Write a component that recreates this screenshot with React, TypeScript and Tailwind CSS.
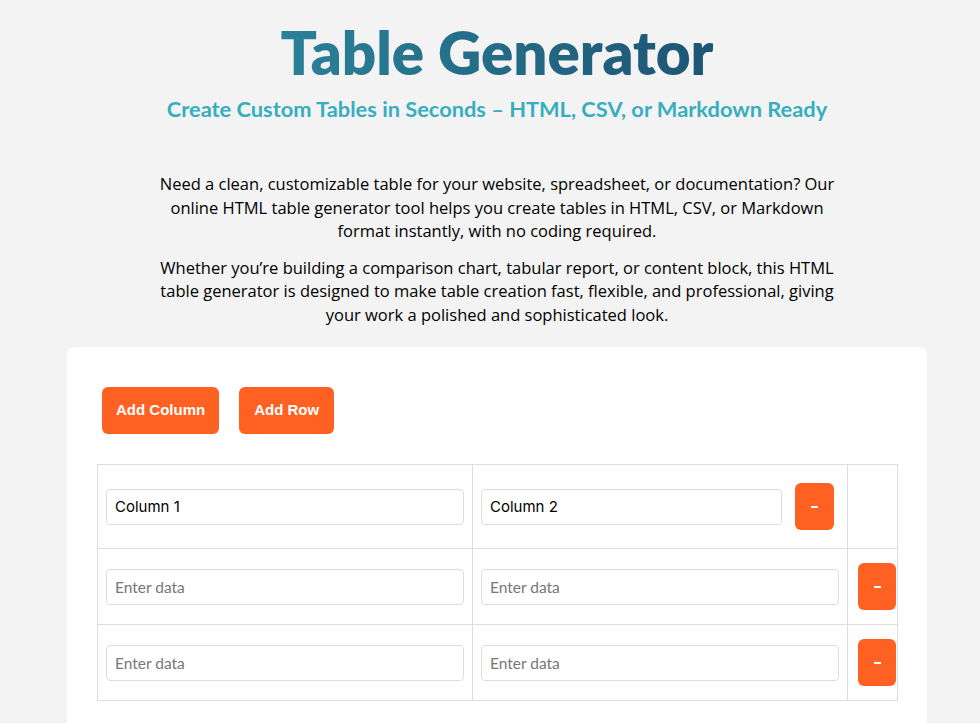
export default function App() {
  const rows = [0, 1];

  return (
    <div className="min-h-screen bg-[#f3f3f3] pl-[14px] font-['Lato',sans-serif] text-black">
      <div className="mx-auto flex w-[860px] flex-col items-center pt-[16px]">
        <h1 className="bg-gradient-to-r from-[#2b8199] to-[#1d5574] bg-clip-text text-[60px] leading-[72px] font-extrabold text-transparent">
          Table Generator
        </h1>
        <p className="mt-[8px] text-[21.8px] leading-[26px] font-bold text-[#37aebf]">
          Create Custom Tables in Seconds – HTML, CSV, or Markdown Ready
        </p>

        <div className="mt-[50px] w-[700px] text-center font-['Open_Sans',sans-serif] text-[16.5px] leading-[23.5px]">
          <p>
            Need a clean, customizable table for your website, spreadsheet, or documentation? Our online HTML table
            generator tool helps you create tables in HTML, CSV, or Markdown format instantly, with no coding required.
          </p>
          <p className="mt-[13px]">
            Whether you’re building a comparison chart, tabular report, or content block, this HTML table generator is
            designed to make table creation fast, flexible, and professional, giving your work a polished and
            sophisticated look.
          </p>
        </div>

        <div className="mt-[21px] w-[860px] rounded-lg bg-white px-[30px] pt-[40px] pb-[30px]">
          <div className="flex gap-5 pl-[5px]">
            <button className="h-[47px] rounded-md bg-[#ff6122] px-[14px] font-['Liberation_Sans',sans-serif] text-[15px] font-bold text-white">
              Add Column
            </button>
            <button className="h-[47px] rounded-md bg-[#ff6122] px-[15px] font-['Liberation_Sans',sans-serif] text-[15px] font-bold text-white">
              Add Row
            </button>
          </div>

          <table className="mt-[30px] w-[800px] table-fixed border-collapse">
            <colgroup>
              <col className="w-[375px]" />
              <col className="w-[375px]" />
              <col className="w-[50px]" />
            </colgroup>
            <tbody>
              <tr className="h-[84px]">
                <td className="border border-[#dddddd] px-2">
                  <input
                    defaultValue="Column 1"
                    className="h-[36px] w-full rounded border border-[#dddddd] px-2 font-['Inter',sans-serif] text-[15px] outline-none"
                  />
                </td>
                <td className="border border-[#dddddd] px-2">
                  <div className="flex items-center gap-[13px]">
                    <input
                      defaultValue="Column 2"
                      className="h-[36px] w-[301px] rounded border border-[#dddddd] px-2 font-['Inter',sans-serif] text-[15px] outline-none"
                    />
                    <button className="flex h-[47px] w-[39px] items-center justify-center rounded-md bg-[#ff6122]">
                      <span className="block h-[2px] w-[7px] bg-white" />
                    </button>
                  </div>
                </td>
                <td className="border border-[#dddddd]" />
              </tr>
              {rows.map((r) => (
                <tr key={r} className="h-[76px]">
                  <td className="border border-[#dddddd] px-2">
                    <input
                      placeholder="Enter data"
                      className="h-[36px] w-full rounded border border-[#dddddd] px-2 text-[15.5px] outline-none placeholder:text-[#777777]"
                    />
                  </td>
                  <td className="border border-[#dddddd] px-2">
                    <input
                      placeholder="Enter data"
                      className="h-[36px] w-full rounded border border-[#dddddd] px-2 text-[15.5px] outline-none placeholder:text-[#777777]"
                    />
                  </td>
                  <td className="border border-[#dddddd] pl-[10px]">
                    <button className="flex h-[47px] w-[38px] items-center justify-center rounded-md bg-[#ff6122]">
                      <span className="block h-[2px] w-[7px] bg-white" />
                    </button>
                  </td>
                </tr>
              ))}
            </tbody>
          </table>
        </div>
      </div>
    </div>
  );
}
